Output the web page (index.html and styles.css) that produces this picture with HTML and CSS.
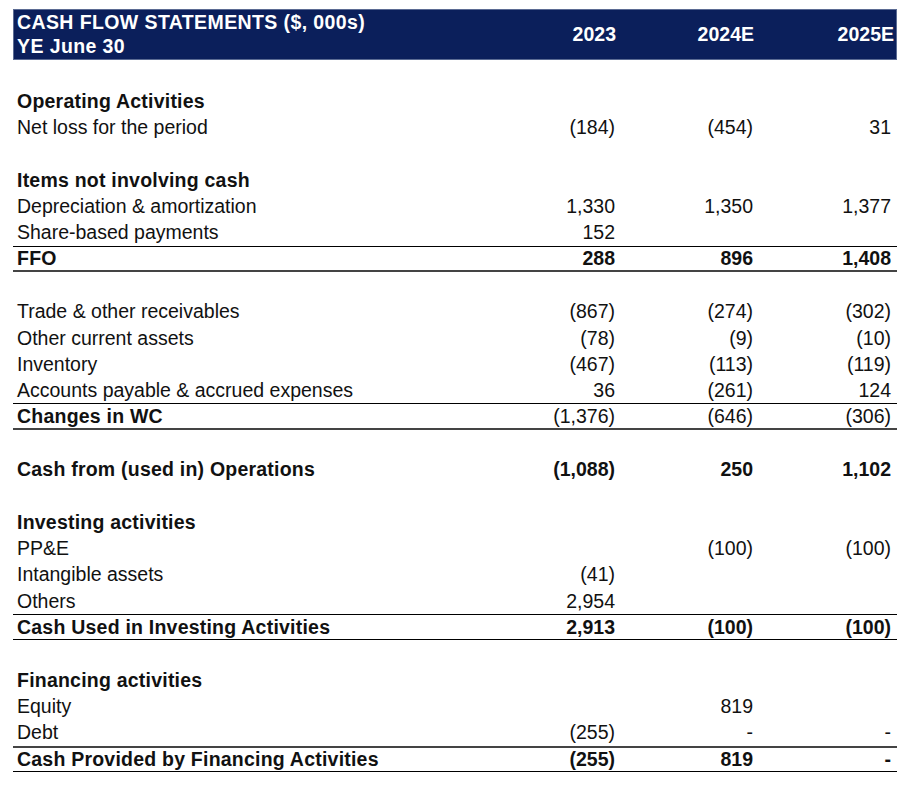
FILE: index.html
```html
<!DOCTYPE html>
<html>
<head>
<meta charset="utf-8">
<link rel="stylesheet" href="styles.css">
</head>
<body>
<div class="sheet">
  <div class="head">
    <div class="head-label">CASH FLOW STATEMENTS ($, 000s)<br>YE June 30</div>
    <div class="num">2023</div>
    <div class="num">2024E</div>
    <div class="num">2025E</div>
  </div>
  <div class="spacer"></div>

  <div class="row b"><div class="lbl">Operating Activities</div><div class="num"></div><div class="num"></div><div class="num"></div></div>
  <div class="row"><div class="lbl">Net loss for the period</div><div class="num">(184)</div><div class="num">(454)</div><div class="num">31</div></div>
  <div class="row"><div class="lbl"></div></div>
  <div class="row b"><div class="lbl">Items not involving cash</div></div>
  <div class="row"><div class="lbl">Depreciation &amp; amortization</div><div class="num">1,330</div><div class="num">1,350</div><div class="num">1,377</div></div>
  <div class="row"><div class="lbl">Share-based payments</div><div class="num">152</div><div class="num"></div><div class="num"></div></div>
  <div class="row b total t-thin bt-thick"><div class="lbl">FFO</div><div class="num">288</div><div class="num">896</div><div class="num">1,408</div></div>
  <div class="row"><div class="lbl"></div></div>
  <div class="row"><div class="lbl">Trade &amp; other receivables</div><div class="num">(867)</div><div class="num">(274)</div><div class="num">(302)</div></div>
  <div class="row"><div class="lbl">Other current assets</div><div class="num">(78)</div><div class="num">(9)</div><div class="num">(10)</div></div>
  <div class="row"><div class="lbl">Inventory</div><div class="num">(467)</div><div class="num">(113)</div><div class="num">(119)</div></div>
  <div class="row"><div class="lbl">Accounts payable &amp; accrued expenses</div><div class="num">36</div><div class="num">(261)</div><div class="num">124</div></div>
  <div class="row total t-thin bt-thick"><div class="lbl bold">Changes in WC</div><div class="num">(1,376)</div><div class="num">(646)</div><div class="num">(306)</div></div>
  <div class="row"><div class="lbl"></div></div>
  <div class="row b"><div class="lbl">Cash from (used in) Operations</div><div class="num">(1,088)</div><div class="num">250</div><div class="num">1,102</div></div>
  <div class="row"><div class="lbl"></div></div>
  <div class="row b"><div class="lbl">Investing activities</div></div>
  <div class="row"><div class="lbl">PP&amp;E</div><div class="num"></div><div class="num">(100)</div><div class="num">(100)</div></div>
  <div class="row"><div class="lbl">Intangible assets</div><div class="num">(41)</div><div class="num"></div><div class="num"></div></div>
  <div class="row"><div class="lbl">Others</div><div class="num">2,954</div><div class="num"></div><div class="num"></div></div>
  <div class="row b total t-thin bt-thin"><div class="lbl">Cash Used in Investing Activities</div><div class="num">2,913</div><div class="num">(100)</div><div class="num">(100)</div></div>
  <div class="row"><div class="lbl"></div></div>
  <div class="row b"><div class="lbl">Financing activities</div></div>
  <div class="row"><div class="lbl">Equity</div><div class="num"></div><div class="num">819</div><div class="num"></div></div>
  <div class="row"><div class="lbl">Debt</div><div class="num">(255)</div><div class="num">-</div><div class="num">-</div></div>
  <div class="row b total t-thick bt-thin"><div class="lbl">Cash Provided by Financing Activities</div><div class="num">(255)</div><div class="num">819</div><div class="num">-</div></div>
</div>
</body>
</html>
```

FILE: styles.css
```css
html, body {
  margin: 0;
  padding: 0;
  background: #ffffff;
}

body {
  font-family: "Liberation Sans", Arial, sans-serif;
  font-size: 19.5px;
  color: #111111;
}

.sheet {
  width: 884px;
  margin: 9px 0 0 13px;
}

.head {
  display: grid;
  grid-template-columns: 470px 138px 138px 138px;
  align-items: center;
  height: 51px;
  box-sizing: border-box;
  background: #0b1f5b;
  border: 1px solid #5b6b93;
  color: #ffffff;
  font-weight: bold;
}

.head-label {
  padding-left: 3px;
  line-height: 23.5px;
  letter-spacing: 0.4px;
}

.head .num {
  padding-right: 6px;
}

.head .num:last-child {
  padding-right: 4px;
}

.spacer {
  height: 27.7px;
}

.row {
  display: grid;
  grid-template-columns: 470px 138px 138px 138px;
  align-items: center;
  height: 26.32px;
  box-sizing: border-box;
  line-height: 22px;
}

.lbl {
  padding-left: 4px;
  white-space: nowrap;
}

.num {
  text-align: right;
  padding-right: 6px;
  white-space: nowrap;
}

.b,
.bold {
  font-weight: bold;
}

.b .lbl,
.lbl.bold {
  letter-spacing: 0.22px;
}

.t-thin {
  border-top: 1px solid #000000;
}

.t-thick {
  border-top: 2px solid #444444;
}

.bt-thin {
  border-bottom: 1px solid #000000;
}

.bt-thick {
  border-bottom: 2px solid #444444;
}
```
